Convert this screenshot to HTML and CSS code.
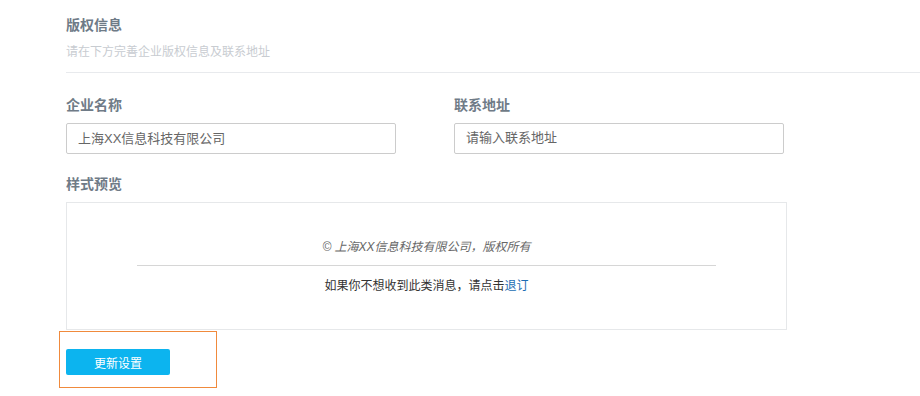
FILE: index.html
```html
<!DOCTYPE html>
<html lang="en">

<head>
    <meta charset="UTF-8">
    <meta name="viewport" content="width=device-width, initial-scale=1.0">
    <title>版权信息</title>
    <link rel="stylesheet" href="styles.css">
</head>

<body>

    <div class="page">
        <div class="head">
            <h2>版权信息</h2>
            <p class="tip">请在下方完善企业版权信息及联系地址</p>
        </div>

        <div class="row">
            <div class="field">
                <label for="company">企业名称</label>
                <input type="text" id="company" value="上海XX信息科技有限公司" autocomplete="off">
            </div>
            <div class="field">
                <label for="address">联系地址</label>
                <input type="text" id="address" placeholder="请输入联系地址" autocomplete="off">
            </div>
        </div>

        <div class="label">样式预览</div>
        <div class="preview">
            <p class="copy">© 上海XX信息科技有限公司，版权所有</p>
            <p class="unsub">如果你不想收到此类消息，请点击<a href="#">退订</a></p>
        </div>

        <div class="actions">
            <button type="button" class="btn">更新设置</button>
        </div>
    </div>

</body>

</html>
```

FILE: styles.css
```css
* {
    margin: 0;
    padding: 0;
    box-sizing: border-box;
}

body {
    background-color: #fff;
    font-family: "Liberation Sans", "Noto Sans CJK SC", sans-serif;
    color: #333;
}

.page {
    padding: 15px 0 0 66px;
}

.head {
    border-bottom: 1px solid #e8eaed;
    padding-bottom: 12px;

    & h2 {
        font-size: 14px;
        line-height: 20px;
        font-weight: bold;
        color: #6f7b87;
    }
}

.tip {
    margin-top: 9px;
    font-size: 12px;
    line-height: 16px;
    color: #c8ccd1;
}

.row {
    display: flex;
    gap: 58px;
    margin-top: 22px;
}

.field {
    width: 330px;
    display: flex;
    flex-direction: column;

    & input {
        margin-top: 8px;
        height: 31px;
        width: 100%;
        border: 1px solid #ccc;
        border-radius: 2px;
        padding: 0 11px 3px;
        font-family: inherit;
        font-size: 13px;
        color: #666;
        outline: none;
    }

    & input::placeholder {
        color: #666;
    }
}

.field label,
.label {
    font-size: 14px;
    line-height: 20px;
    font-weight: bold;
    color: #6f7b87;
}

.label {
    margin-top: 20px;
}

.preview {
    margin-top: 8px;
    width: 721px;
    height: 128px;
    border: 1px solid #e6e8ea;
    padding: 34px 70px 0;
    text-align: center;
    font-size: 12px;
}

.copy {
    line-height: 20px;
    font-style: italic;
    color: #666;
    padding-bottom: 8px;
    border-bottom: 1px solid #d6d6d6;
}

.unsub {
    margin-top: 10px;
    line-height: 20px;
    color: #333;

    & a {
        color: #1a6db3;
        text-decoration: none;
    }
}

.actions {
    margin: 1px 0 0 -7px;
    width: 158px;
    border: 1px solid #f08a3c;
    padding: 17px 6px 12px;
}

.btn {
    display: block;
    width: 104px;
    height: 26px;
    border: none;
    border-radius: 2px;
    background-color: #0cb4ef;
    color: #fff;
    font-family: inherit;
    font-size: 12px;
    cursor: pointer;
}
```
